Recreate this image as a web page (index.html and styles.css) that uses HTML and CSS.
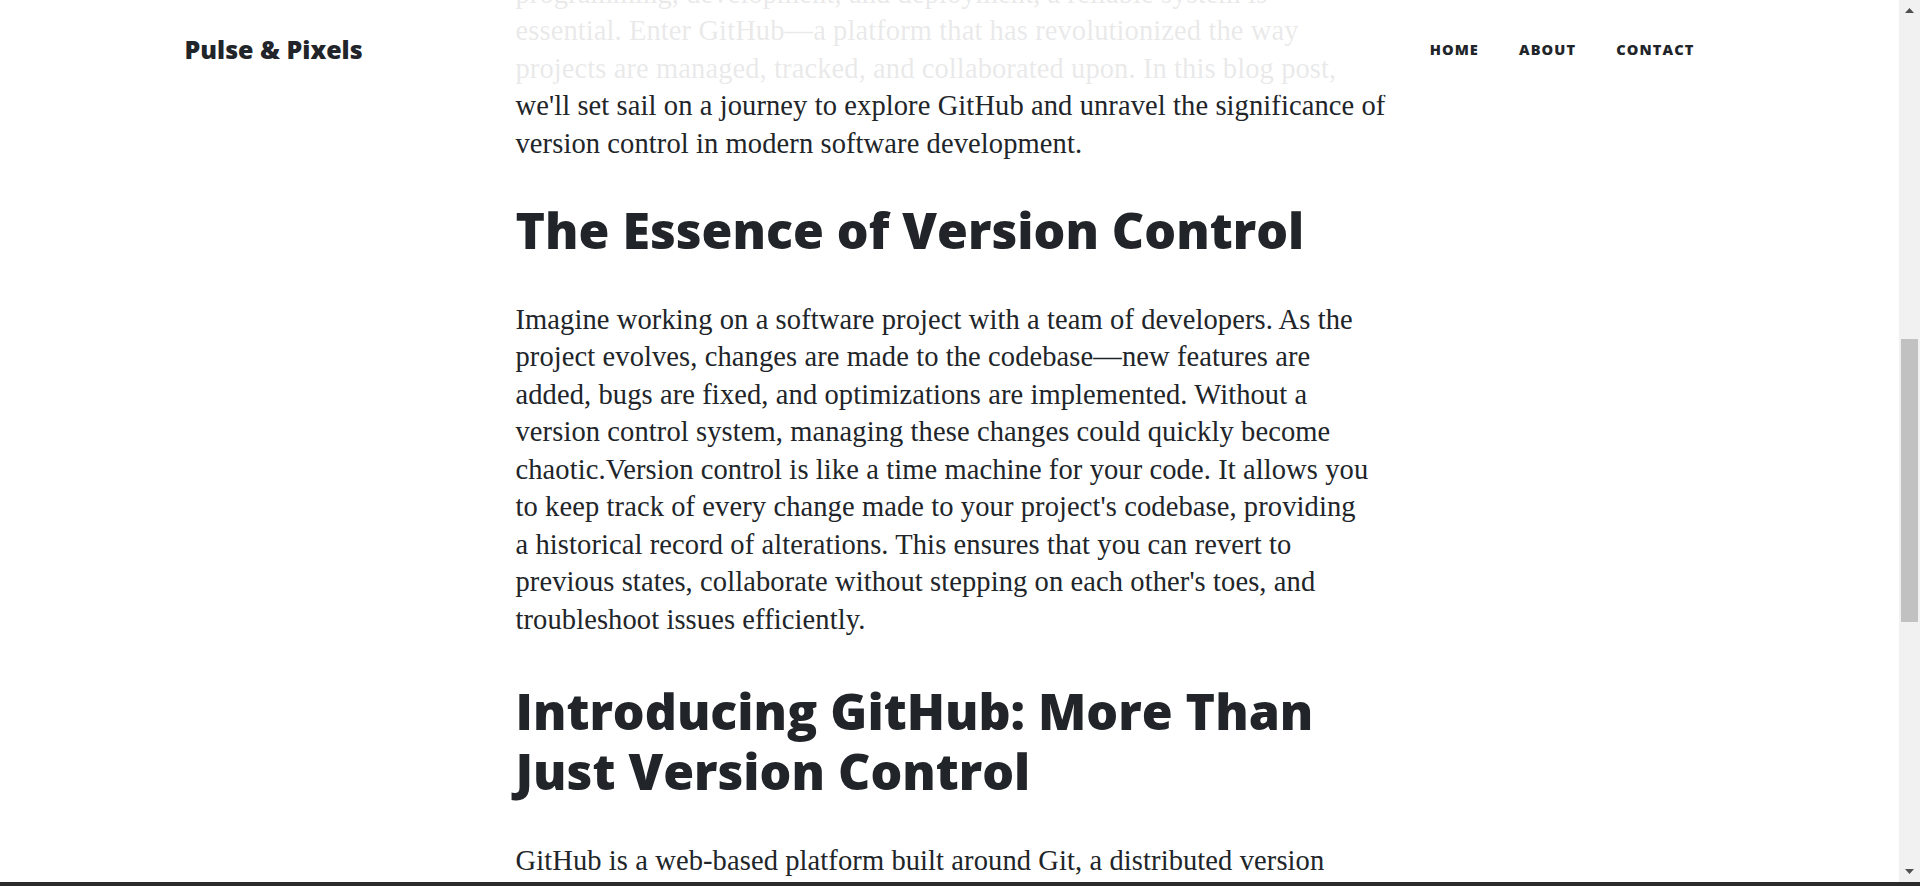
FILE: index.html
```html
<!DOCTYPE html>
<html lang="en">
<head>
<meta charset="utf-8">
<title>Pulse &amp; Pixels</title>
<link rel="stylesheet" href="styles.css">
</head>
<body>
<div class="window">
  <div class="viewport">
    <nav class="navbar">
      <div class="nav-inner">
        <a class="brand" href="#">Pulse &amp; Pixels</a>
        <ul class="nav-links">
          <li><a href="#">Home</a></li>
          <li><a href="#">About</a></li>
          <li><a href="#">Contact</a></li>
        </ul>
      </div>
    </nav>
    <article class="post">
      <div class="post-col">
        <p class="cut">programming, development, and deployment, a reliable system is<br>
essential. Enter GitHub—a platform that has revolutionized the way<br>
projects are managed, tracked, and collaborated upon. In this blog post,<br>
we'll set sail on a journey to explore GitHub and unravel the significance of<br>
version control in modern software development.</p>
        <h2>The Essence of Version Control</h2>
        <p>Imagine working on a software project with a team of developers. As the<br>
project evolves, changes are made to the codebase—new features are<br>
added, bugs are fixed, and optimizations are implemented. Without a<br>
version control system, managing these changes could quickly become<br>
chaotic.Version control is like a time machine for your code. It allows you<br>
to keep track of every change made to your project's codebase, providing<br>
a historical record of alterations. This ensures that you can revert to<br>
previous states, collaborate without stepping on each other's toes, and<br>
troubleshoot issues efficiently.</p>
        <h2 class="spaced">Introducing GitHub: More Than Just Version Control</h2>
        <p>GitHub is a web-based platform built around Git, a distributed version<br>
control system created by Linus Torvalds. While Git handles the tracking<br>
of changes, GitHub adds a layer of collaboration and management.</p>
      </div>
    </article>
  </div>
  <div class="scrollbar">
    <div class="sb-btn"><svg width="9" height="5" viewBox="0 0 9 5"><polygon points="0,5 4.5,0 9,5" fill="#505050"/></svg></div>
    <div class="sb-track"><div class="sb-thumb"></div></div>
    <div class="sb-btn"><svg width="9" height="5" viewBox="0 0 9 5"><polygon points="0,0 9,0 4.5,5" fill="#505050"/></svg></div>
  </div>
</div>
<div class="taskbar"></div>
</body>
</html>
```
FILE: styles.css
```css
* { box-sizing: border-box; }

html, body {
  margin: 0;
  height: 100%;
}

body {
  overflow: hidden;
  background: #fff;
  color: #212529;
  font-family: "Liberation Serif", "Times New Roman", serif;
}

.window {
  display: flex;
  height: 882px;
}

.viewport {
  position: relative;
  flex: 1;
  overflow: hidden;
}

.navbar {
  position: absolute;
  top: 0;
  left: 0;
  right: 0;
  height: 95px;
  background: rgba(255, 255, 255, 0.9);
  z-index: 2;
}

.nav-inner {
  max-width: 1650px;
  height: 100%;
  margin: 0 auto;
  padding: 3px 60px 0;
  display: flex;
  align-items: center;
  justify-content: space-between;
}

.brand {
  font-family: "Open Sans", sans-serif;
  font-weight: 800;
  font-size: 25px;
  color: #212529;
  text-decoration: none;
}

.nav-links {
  list-style: none;
  margin: 0;
  padding: 0;
  display: flex;
}

.nav-links a {
  display: block;
  padding: 0 20px;
  font-family: "Open Sans", sans-serif;
  font-weight: 800;
  font-size: 14.6px;
  letter-spacing: 1.1px;
  text-transform: uppercase;
  color: #212529;
  text-decoration: none;
}

.post {
  max-width: 1650px;
  margin: 0 auto;
  padding: 0 60px;
}

.post-col {
  max-width: 868px;
  margin: 0 auto;
}

.post-col p {
  font-size: 28.5px;
  line-height: 37.5px;
  letter-spacing: 0.1px;
  margin: 37.5px 0;
  white-space: nowrap;
}

.post-col p.cut {
  margin-top: -25.5px;
}

.post-col h2 {
  font-family: "Open Sans", sans-serif;
  font-weight: 800;
  font-size: 50px;
  line-height: 1.2;
  margin: 0 0 41px;
  color: #212529;
}

.post-col h2.spaced {
  margin-top: 42.5px;
}

.scrollbar {
  width: 21px;
  background: #f1f1f1;
  display: flex;
  flex-direction: column;
}

.sb-btn {
  height: 21px;
  display: flex;
  align-items: center;
  justify-content: center;
}

.sb-track {
  flex: 1;
  padding: 0 2px;
}

.sb-thumb {
  margin-top: 318px;
  height: 283px;
  background: #c1c1c1;
}

.taskbar {
  height: 4px;
  background: #2b2b2b;
}
```
